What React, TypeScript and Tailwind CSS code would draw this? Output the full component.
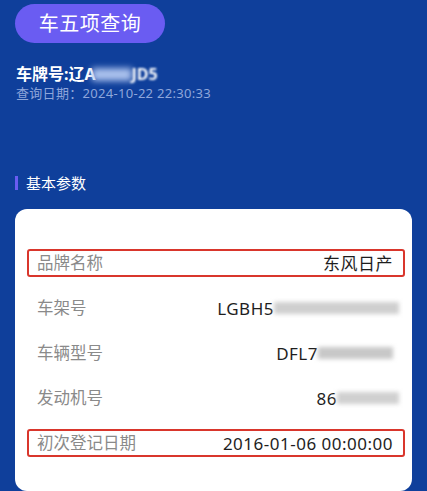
import React from "react";

const font = { fontFamily: '"Noto Sans", "Noto Sans CJK SC", sans-serif' };

function Blur({ w, cls }: { w: string; cls: string }) {
  return <span className={`inline-block ${w} ${cls}`} />;
}

function Row({
  label,
  value,
  hl,
}: {
  label: string;
  value: React.ReactNode;
  hl?: boolean;
}) {
  return (
    <div
      className={`flex items-center justify-between h-[28px] pl-[8px] pr-[10px] rounded-[3px] border-2 ${
        hl ? "border-[#d9362c]" : "border-transparent"
      }`}
    >
      <span className="text-[16.5px] text-[#8a8a8a] leading-none">{label}</span>
      <span className="text-[17px] tracking-[0.5px] text-[#1e1e1e] leading-none flex items-center">{value}</span>
    </div>
  );
}

export default function App() {
  return (
    <div className="w-[427px] h-[491px] overflow-hidden bg-[#0f3f9b] flex flex-col" style={font}>
      <div className="pl-[15px] pt-[4px]">
        <div className="w-[150px] h-[39px] rounded-full bg-[#6a5cf2] flex items-center justify-center text-white text-[20px] tracking-[0.5px] leading-none">
          车五项查询
        </div>
      </div>
      <div className="pl-[16px] mt-[22px] flex items-center text-white text-[16px] font-bold leading-none h-[18px]">
        <span>车牌号:辽</span>
        <span>A</span>
        <span className="inline-block w-[40px] h-[13px] bg-[#a9c0ec] blur-[3px] -ml-[4px]" />
        <span className="blur-[1px]">JD5</span>
      </div>
      <div className="pl-[16px] mt-[4px] text-[13px] tracking-[0.3px] text-[#8ea6da] leading-none">
        查询日期：2024-10-22 22:30:33
      </div>
      <div className="pl-[15px] mt-[75px] flex items-center gap-[8px] h-[16px]">
        <span className="w-[3px] h-[14px] bg-[#6a5cf2]" />
        <span className="text-white text-[15px] leading-none">基本参数</span>
      </div>
      <div className="mx-[15px] mt-[18px] flex-1 bg-white rounded-[12px] pt-[40px] pl-[12px] pr-[7px] flex flex-col gap-[17px]">
        <Row label="品牌名称" value="东风日产" hl />
        <Row
          label="车架号"
          value={
            <>
              LGBH5
              <Blur w="w-[125px]" cls="h-[12px] bg-[#cfcfcf] blur-[2px] -mr-[6px]" />
            </>
          }
        />
        <Row
          label="车辆型号"
          value={
            <>
              DFL7
              <Blur w="w-[75px]" cls="h-[12px] bg-[#c8c8c8] blur-[2px]" />
            </>
          }
        />
        <Row
          label="发动机号"
          value={
            <>
              86
              <Blur w="w-[62px]" cls="h-[12px] bg-[#d0d0d0] blur-[2px] -mr-[6px]" />
            </>
          }
        />
        <Row label="初次登记日期" value="2016-01-06 00:00:00" hl />
      </div>
    </div>
  );
}
